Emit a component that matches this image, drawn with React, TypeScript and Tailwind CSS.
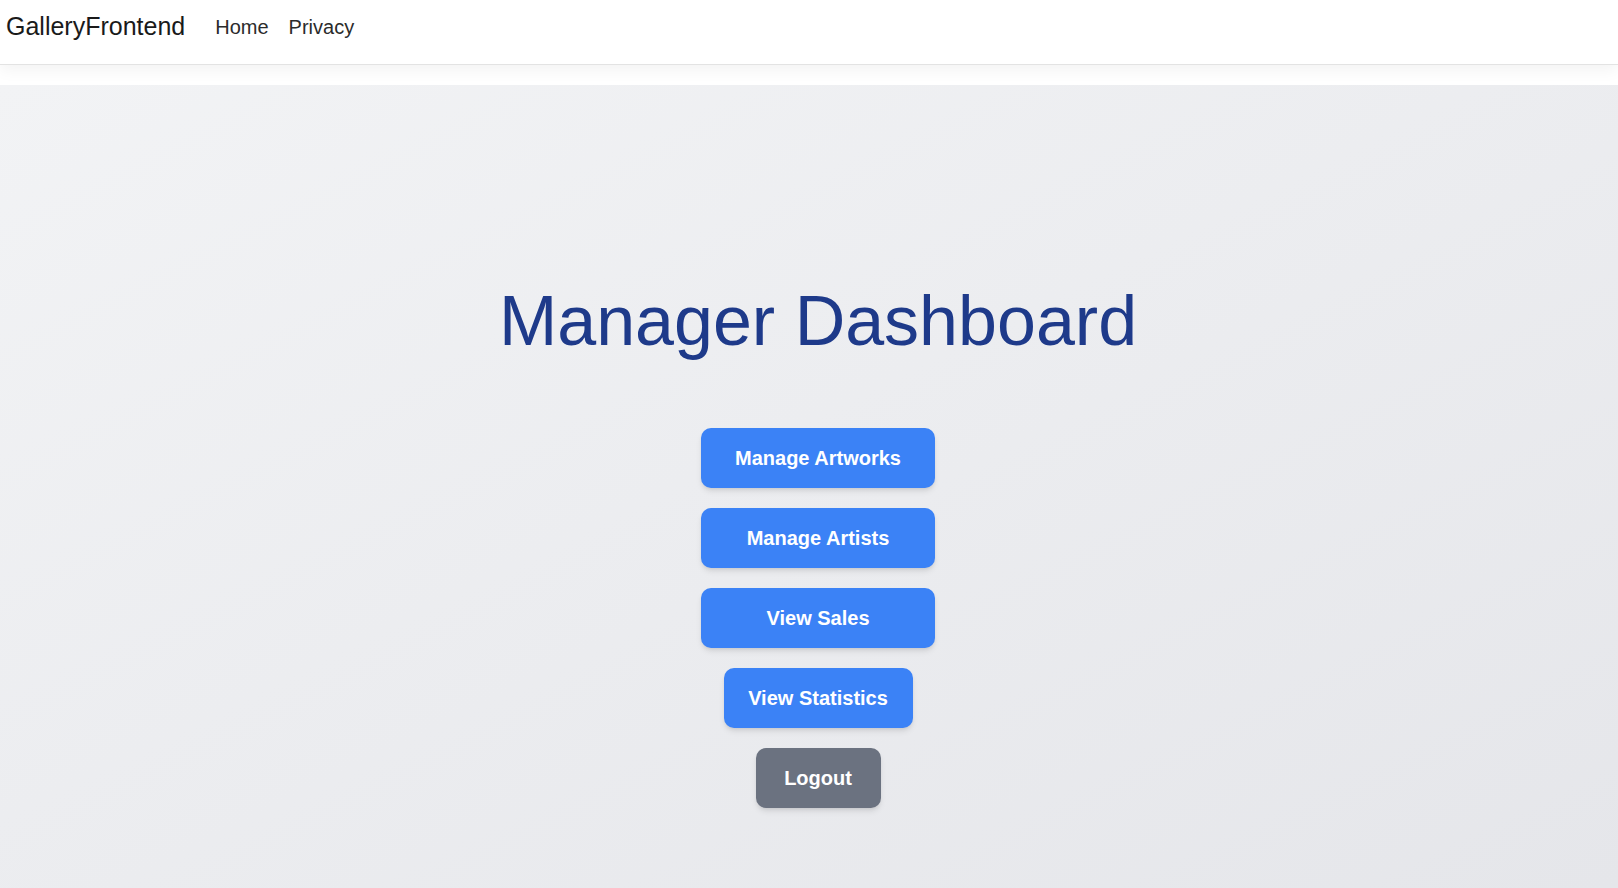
import React from 'react'

const font = { fontFamily: '"Liberation Sans", Arial, sans-serif' }

export default function App() {
  return (
    <div className="min-h-screen bg-white" style={font}>
      {/* Top navbar */}
      <nav className="h-[65px] bg-white border-b border-[#e3e3e3] shadow-[0_5px_15px_rgba(0,0,0,0.05)] mb-[20px] flex items-center pl-[6px] pb-[10px]">
        <a href="#" className="text-[25px] text-[#1a1a1a] mr-[20px] leading-none pb-[2px]">GalleryFrontend</a>
        <a href="#" className="text-[20px] text-[#2b2b2b] px-[10px] leading-none">Home</a>
        <a href="#" className="text-[20px] text-[#2b2b2b] px-[10px] leading-none">Privacy</a>
      </nav>

      {/* Dashboard */}
      <main className="min-h-[803px] bg-gradient-to-br from-[#f2f3f5] to-[#e5e6ea] flex flex-col items-center pt-[196px] pb-[80px] pl-[18px]">
        <h1 className="text-[70px] leading-[80px] text-[#1e3a8a] mb-[67px]">Manager Dashboard</h1>

        <div className="flex flex-col items-center gap-[20px]">
          <button className="w-[234px] h-[60px] rounded-[10px] bg-[#3b82f6] text-white text-[20px] font-bold shadow-md">Manage Artworks</button>
          <button className="w-[234px] h-[60px] rounded-[10px] bg-[#3b82f6] text-white text-[20px] font-bold shadow-md">Manage Artists</button>
          <button className="w-[234px] h-[60px] rounded-[10px] bg-[#3b82f6] text-white text-[20px] font-bold shadow-md">View Sales</button>
          <button className="w-[189px] h-[60px] rounded-[10px] bg-[#3b82f6] text-white text-[20px] font-bold shadow-md">View Statistics</button>
          <button className="w-[125px] h-[60px] rounded-[10px] bg-[#6b7280] text-white text-[20px] font-bold shadow-md">Logout</button>
        </div>
      </main>
    </div>
  )
}
